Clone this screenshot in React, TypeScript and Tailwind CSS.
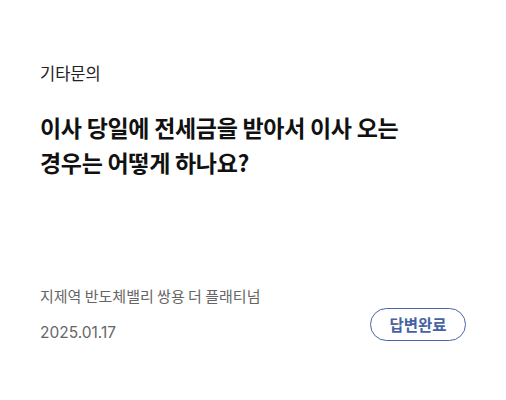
import React from "react";

export default function App() {
  return (
    <div
      className="w-[506px] h-[400px] bg-white flex flex-col px-[40px] pt-[61px]"
      style={{ fontFamily: '"Noto Sans CJK KR", "Noto Sans", sans-serif' }}
    >
      <div className="text-[16.5px] leading-[24px] text-[#222222]">기타문의</div>
      <div className="mt-[25px] text-[23px] leading-[35px] font-bold text-[#111111] tracking-[-0.3px]">
        이사 당일에 전세금을 받아서 이사 오는
        <br />
        경우는 어떻게 하나요?
      </div>
      <div className="mt-[105px] text-[15px] leading-[22px] text-[#666666]">
        지제역 반도체밸리 쌍용 더 플래티넘
      </div>
      <div className="mt-[15px] flex items-center justify-between">
        <div className="text-[15.5px] leading-[22px] text-[#666666]" style={{ fontFamily: '"Inter", "Noto Sans CJK KR", sans-serif' }}>2025.01.17</div>
        <div className="w-[96px] h-[33px] rounded-full border border-[#4a65a8] flex items-center justify-center text-[15.5px] font-bold text-[#4662a2] -mt-[17px]">
          답변완료
        </div>
      </div>
    </div>
  );
}
